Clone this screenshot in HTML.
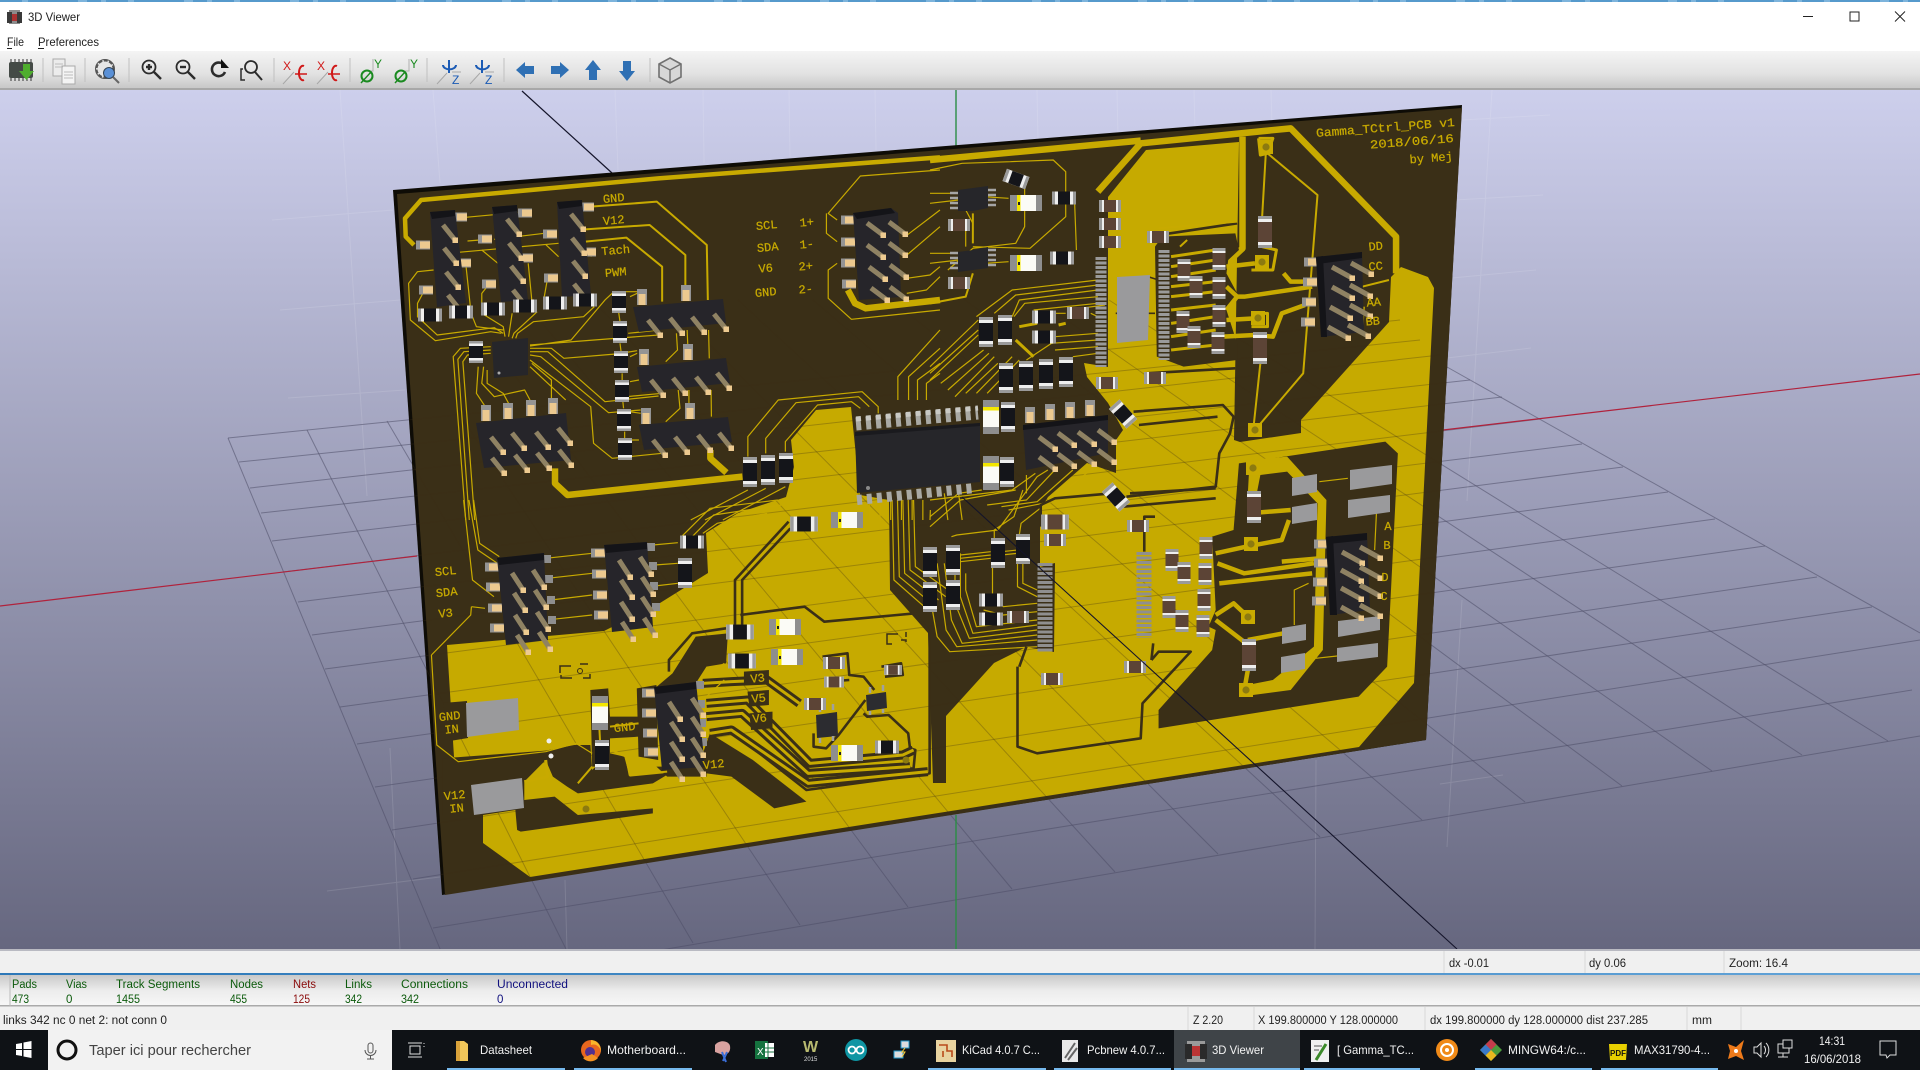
<!DOCTYPE html>
<html lang="fr"><head><meta charset="utf-8"><title>3D Viewer</title>
<style>
html,body{margin:0;padding:0;background:#f0f0f0;overflow:hidden}
svg{display:block}
text{font-family:"Liberation Sans",sans-serif}
.t,.t2,.t3,.t4,.t5,.d,.d2,.d3{fill:none;vector-effect:non-scaling-stroke;stroke-linejoin:round}
.t{stroke:#c8aa00;stroke-width:1.2}
.t2{stroke:#c8aa00;stroke-width:2}
.t3{stroke:#c8aa00;stroke-width:3}
.t4{stroke:#c8aa00;stroke-width:4.5}
.t5{stroke:#c8aa00;stroke-width:6.5}
.d{stroke:#3a2f17;stroke-width:1.6}
.d2{stroke:#3a2f17;stroke-width:2.6}
.d3{stroke:#3a2f17;stroke-width:9}
.s text{font-family:"Liberation Mono",monospace;fill:#c8aa00;stroke:#c8aa00;stroke-width:.25;font-size:12px;text-anchor:middle}
.ui{font-size:12px;fill:#222}
.sb{font-size:11.5px}
.tb{font-size:12px;fill:#f2f2f2}
</style></head><body>
<svg xmlns="http://www.w3.org/2000/svg" width="1920" height="1070" viewBox="0 0 1920 1070">
<defs>
<linearGradient id="bg" x1="0" y1="0" x2="0" y2="1"><stop offset="0" stop-color="#cdcfec"/><stop offset="1" stop-color="#66677f"/></linearGradient>
<linearGradient id="tbg" x1="0" y1="0" x2="0" y2="1"><stop offset="0" stop-color="#f4f4f4"/><stop offset=".6" stop-color="#e2e2e2"/><stop offset="1" stop-color="#c6c6c6"/></linearGradient>
<linearGradient id="pn" x1="0" y1="0" x2="0" y2="1"><stop offset="0" stop-color="#c9c9c9"/><stop offset=".5" stop-color="#ececec"/><stop offset="1" stop-color="#f7f7f7"/></linearGradient>
<linearGradient id="blu" x1="0" y1="0" x2="1" y2="0"><stop offset="0" stop-color="#2d78b8"/><stop offset="1" stop-color="#63a4d8"/></linearGradient>
<clipPath id="cv"><rect x="0" y="90" width="1920" height="860"/></clipPath>
<clipPath id="bd"><polygon points="393,190 1462,105 1426,740 442,895"/></clipPath>

<g id="bv"><rect x="-7" y="-11" width="14" height="22" fill="#eee"/><rect x="-7" y="-11" width="14" height="2.5" fill="#9a9a9a"/><rect x="-7" y="8.5" width="14" height="2.5" fill="#9a9a9a"/><rect x="-7" y="-6" width="14" height="12" fill="#14151a"/></g>
<g id="bV"><rect x="-7" y="-15" width="14" height="30" fill="#eee"/><rect x="-7" y="-15" width="14" height="3" fill="#9a9a9a"/><rect x="-7" y="12" width="14" height="3" fill="#9a9a9a"/><rect x="-7" y="-9" width="14" height="18" fill="#14151a"/></g>
<g id="bh"><rect x="-12" y="-6.5" width="24" height="13" fill="#eee"/><rect x="-12" y="-6.5" width="3" height="13" fill="#9a9a9a"/><rect x="9" y="-6.5" width="3" height="13" fill="#9a9a9a"/><rect x="-6" y="-6.5" width="12" height="13" fill="#14151a"/></g>
<g id="br"><rect x="-6.5" y="-11" width="13" height="22" fill="#eee"/><rect x="-6.5" y="-11" width="13" height="3" fill="#9a9a9a"/><rect x="-6.5" y="8" width="13" height="3" fill="#9a9a9a"/><rect x="-6.5" y="-6" width="13" height="12" fill="#5c4436"/></g>
<g id="bR"><rect x="-7" y="-16" width="14" height="32" fill="#eee"/><rect x="-7" y="-16" width="14" height="3" fill="#9a9a9a"/><rect x="-7" y="13" width="14" height="3" fill="#9a9a9a"/><rect x="-7" y="-10" width="14" height="20" fill="#5c4436"/></g>
<g id="brh"><rect x="-11" y="-6" width="22" height="12" fill="#eee"/><rect x="-11" y="-6" width="3" height="12" fill="#9a9a9a"/><rect x="8" y="-6" width="3" height="12" fill="#9a9a9a"/><rect x="-6" y="-6" width="12" height="12" fill="#5c4436"/></g>
<g id="lh"><rect x="-16" y="-8" width="32" height="16" fill="#8e8e8e"/><rect x="-9" y="-8" width="19" height="16" fill="#fbfbf6"/><rect x="-9" y="-8" width="3.5" height="16" fill="#f4e700"/><rect x="-8" y="-1" width="2" height="3" fill="#222"/></g>
<g id="lv"><rect x="-8" y="-17" width="16" height="34" fill="#8e8e8e"/><rect x="-8" y="-10" width="16" height="20" fill="#fbfbf6"/><rect x="-8" y="-10" width="16" height="3.5" fill="#f4e700"/></g>
<g id="p"><line x1="0" y1="0" x2="12" y2="15" stroke="#8f8263" stroke-width="5"/><rect x="9.5" y="12.5" width="5.5" height="5.5" fill="#edca90"/></g>
<g id="q"><line x1="0" y1="0" x2="16" y2="12" stroke="#8f8263" stroke-width="5"/><rect x="13.5" y="9.5" width="5.5" height="5.5" fill="#edca90"/></g>
<g id="r"><line x1="0" y1="0" x2="20" y2="11" stroke="#8f8263" stroke-width="5"/><rect x="17.5" y="8.5" width="5.5" height="5.5" fill="#edca90"/></g>
<g id="s"><line x1="0" y1="0" x2="11" y2="17" stroke="#8f8263" stroke-width="5"/><rect x="8.5" y="14.5" width="5.5" height="5.5" fill="#edca90"/></g>
<g id="pd"><rect x="-7" y="-4.5" width="14" height="9" fill="#949494"/><rect x="-3" y="-3.5" width="10" height="7" fill="#ecc98f"/></g>
<g id="ps"><rect x="-4" y="-4" width="8" height="8" fill="#8e8e8e"/></g>
<g id="pv"><rect x="-5" y="-8" width="10" height="16" fill="#949494"/><rect x="-3.5" y="-3" width="7" height="11" fill="#ecc98f"/></g>
<g id="via"><rect x="-7" y="-7" width="14" height="14" fill="#c8aa00"/><circle r="3.6" fill="#8c7a10"/></g>
<g id="grid" fill="none">
<path d="M228,438L1400,320M239,462L1420,340M250,488L1440,355M261,513L1470,380M272,541L1502,397M283,572L1540,419M298,602L1582,444M312,635L1623,467M325,669L1668,492M340,707L1715,519M357,744L1765,546M375,787L1817,577M392,830L1872,607M413,879L1920,640M433,928L1912,690M455,985L1920,736"/>
<path d="M228,438L455,985M307,430L573,963M387,421L693,943M460,415L800,925M459,300L908,907M523,300L1012,889M593,300L1115,872M665,300L1218,854M738,300L1320,837M813,300L1422,820M891,300L1525,802M965,300L1622,786M1038,300L1712,771M1109,300L1802,755M1176,300L1888,741M1447,367L1920,633"/>
</g>
</defs>

<!-- window chrome top -->
<rect width="1920" height="1070" fill="#f0f0f0"/>
<rect width="1920" height="52" fill="#fff"/>
<rect width="1920" height="2" fill="#7db4dc"/>
<line x1="0" y1="1" x2="1920" y2="1" stroke="#2f80bd" stroke-width="1" stroke-dasharray="22 6 50 9 14 5"/>
<g transform="translate(7,10)"><rect x="2" y="0" width="11" height="14" fill="#8c8c8c"/><rect x="0" y="2" width="5" height="11" fill="#3a3a3a"/><rect x="10" y="2" width="5" height="11" fill="#3a3a3a"/><rect x="5" y="4" width="5" height="7" fill="#a33"/></g>
<text x="28" y="21" class="ui" textLength="52" lengthAdjust="spacingAndGlyphs">3D Viewer</text>
<text x="7" y="46" class="ui" textLength="17" lengthAdjust="spacingAndGlyphs">File</text><rect x="7" y="48" width="5" height="1" fill="#222"/>
<text x="38" y="46" class="ui" textLength="61" lengthAdjust="spacingAndGlyphs">Preferences</text><rect x="38" y="48" width="6" height="1" fill="#222"/>
<rect x="1803" y="16" width="10" height="1" fill="#222"/>
<rect x="1850" y="12" width="9" height="9" fill="none" stroke="#222"/>
<path d="M1895,11.5l10,10M1905,11.5l-10,10" stroke="#222" fill="none"/>

<!-- toolbar -->
<rect y="51" width="1920" height="38" fill="url(#tbg)"/>
<rect y="88" width="1920" height="3" fill="#a8a8a8"/>
<g stroke="#c0c0c0"><path d="M43,58V82M85,58V82M129,58V82M274,58V82M350,58V82M427,58V82M504,58V82M650,58V82"/></g>
<!-- i1 chip -->
<rect x="9" y="62" width="24" height="16" rx="2" fill="#444a46"/><path d="M11,62v-3M15,62v-3M19,62v-3M23,62v-3M27,62v-3M31,62v-3M11,78v3M15,78v3M19,78v3M23,78v3M27,78v3M31,78v3" stroke="#333"/><path d="M23,64h7v7h4l-7.5,9-7.5-9h4z" fill="#4fae2e"/>
<!-- i2 copy -->
<rect x="53" y="59" width="12" height="17" fill="#ececec" stroke="#aaa"/><rect x="62" y="66" width="13" height="18" fill="#f4f4f4" stroke="#aaa"/><path d="M55,64h8M55,67h8M64,72h9M64,75h9M64,78h9" stroke="#bbb"/>
<!-- i3 gear -->
<circle cx="105" cy="69" r="8.5" fill="#e6e6e6" stroke="#555" stroke-width="2" stroke-dasharray="4 1.5"/><circle cx="105" cy="69" r="9.5" fill="none" stroke="#555" stroke-width="1"/><circle cx="109" cy="73" r="5.5" fill="#5a90d6" stroke="#345"/><line x1="113" y1="77" x2="119" y2="83" stroke="#666" stroke-width="2"/>
<!-- zoom -->
<g fill="none" stroke="#2c2c2c" stroke-width="1.8"><circle cx="149" cy="67" r="6.5"/><line x1="154" y1="72" x2="161" y2="79" stroke-width="2.4"/><path d="M146,67h6M149,64v6" stroke-width="2.4"/>
<circle cx="183" cy="67" r="6.5"/><line x1="188" y1="72" x2="195" y2="79" stroke-width="2.4"/><path d="M180,67h6" stroke-width="2.4"/>
<path d="M225,72a6.8,6.8 0 1 1-1-7" stroke-width="2.6"/><circle cx="251" cy="67" r="6"/><line x1="255" y1="72" x2="262" y2="80" stroke-width="2"/><path d="M243,69h-2v11h4" stroke-width="1.5"/></g>
<path d="M221,59v9h8z" fill="#111"/>
<!-- X Y Z -->
<g font-size="12" font-family="Liberation Sans"><text x="283" y="70" fill="#d01818">X</text><text x="317" y="70" fill="#d01818">X</text></g>
<g fill="none" stroke="#d01818" stroke-width="2"><path d="M304,66a4,7 0 0 0-5,7a4,7 0 0 0 5,7"/><path d="M337,66a4,7 0 0 0-5,7a4,7 0 0 0 5,7"/><path d="M295,74h12M328,74h12" stroke-width="1.4"/></g>
<path d="M283,84l11-12M317,84l11-12" stroke="#a8a8a8"/>
<g font-size="12"><text x="374" y="68" fill="#1a8a20">Y</text><text x="410" y="68" fill="#1a8a20">Y</text></g>
<path d="M373,59v12h-7M409,59v12h-7" stroke="#b0b0b0" fill="none"/>
<g fill="none" stroke="#1a8a20" stroke-width="2"><circle cx="367" cy="76" r="5.5"/><circle cx="401" cy="76" r="5.5"/></g><path d="M361,83l10-11M395,83l10-11" stroke="#1a8a20" stroke-width="1.4"/>
<g font-size="12"><text x="452" y="84" fill="#1b5bb5">Z</text><text x="485" y="84" fill="#1b5bb5">Z</text></g>
<g fill="none" stroke="#1b5bb5" stroke-width="2"><path d="M443,65a6,4 0 1 0 13,0"/><path d="M449,60v13M482,60v13"/><path d="M476,65a6,4 0 1 0 13,0"/></g>
<path d="M437,84l10-11M452,72h9M470,84l10-11M485,72h9" stroke="#a8a8a8"/>
<!-- arrows -->
<path d="M516,70l9-8v4h9v8h-9v4z" fill="#2f70b4"/><path d="M569,70l-9-8v4h-9v8h9v4z" fill="#2f70b4"/><path d="M593,60l8,10h-4v10h-8V70h-4z" fill="#2f70b4"/><path d="M627,81l8-10h-4V61h-8v10h-4z" fill="#2f70b4"/>
<path d="M670,58l11,6v13l-11,6-11-6V64z" fill="#d8d8d8" stroke="#707070" stroke-width="1.6"/><path d="M659,64l11,6 11-6M670,70v13" fill="none" stroke="#707070" stroke-width="1.4"/>

<!-- 3D canvas -->
<rect y="90" width="1920" height="860" fill="url(#bg)"/>
<g clip-path="url(#cv)">
<g stroke="#fff" stroke-opacity=".12" fill="none"><path d="M340,90L367,496M433,90L440,183M390,748L400,950M615,90L618,170M703,90L704,163M789,90L790,157M875,90L876,150M1037,90L1038,143M1117,90L1118,140M1194,90L1195,130M1271,90L1272,125M1492,90L1467,501M1462,600L1447,847M1316,760L1315,950M565,880L567,950M272,220L393,210M280,310L400,300M288,398L405,390M1462,120L1550,115M1455,200L1543,195M1452,278L1536,270M1447,358L1531,348M1440,784L1503,775M327,891L440,877"/></g>
<use href="#grid" stroke="#4c4d66" stroke-opacity=".55" stroke-width="1"/>
<path d="M0,606L417,556M1443,430L1920,374" stroke="#b0223c" stroke-width="1.2" fill="none"/>
<path d="M956,90V165M956,815V950" stroke="#2b8d45" stroke-width="1.4" fill="none"/>
<path d="M522,91L612,173" stroke="#14142a" stroke-width="1.2" fill="none"/>
</g>

<!-- board -->
<polygon points="393,190 1462,105 1426,740 442,895" fill="#0e0c06"/>
<polygon points="397,194 1462,108 1426,740 445,895" fill="#3a2f17"/>

<!-- main copper -->
<polygon fill="#c6aa00" points="447,645 604,631 660,603 708,573 706,533 738,513 786,497 794,467 791,440 816,410 851,407 860,495 889,500 890,590 928,633 933,783 946,783 946,716 994,663 1026,647 1054,652 1055,563 1040,567 1040,510 1048,497 1087,463 1116,473 1116,440 1123,430 1108,403 1087,377 1084,363 1108,367 1108,197 1146,150 1239,142 1234,440 1240,442 1301,433 1301,420 1389,322 1391,277 1401,267 1428,277 1434,288 1414,683 1359,747 530,877 483,843 483,815 454,757"/>
<use href="#grid" clip-path="url(#bd)" stroke="#3a2f17" stroke-opacity=".3" stroke-width="1"/>
<polygon fill="#3a2f17" points="443,703 467,701 468,738 450,741"/>

<!-- zoom 6 coords : lower left -->
<g transform="translate(410,500) scale(.35714,.33333)">
<polygon fill="#3a2f17" points="90,775 380,752 460,735 505,735 510,810 560,760 600,770 615,830 730,818 680,850 470,880 440,860 400,830 380,780 320,845 320,900 405,890 470,945 680,925 680,940 310,995 300,990 295,930 205,945 90,945"/>
<polygon fill="#3a2f17" points="830,820 900,830 1020,925 1110,905 960,780 840,700 820,760"/>
<polygon fill="#3a2f17" points="735,520 800,410 890,400 885,490 830,500 800,550 680,570"/>
<polygon fill="#3a2f17" points="635,565 690,555 695,780 640,770"/>
<polygon fill="#3a2f17" points="505,570 555,565 560,650 640,650 640,710 560,715 560,800 510,800"/>
<polygon fill="#3a2f17" points="690,800 830,800 830,830 720,830"/>
<!-- outline tracks on pour -->
<path class="d2" d="M925,345L1105,320L1160,365L1415,340L1455,395L1455,820L1110,870L955,740"/>
<path class="d2" d="M910,385L910,240L1060,65M930,385L930,240L1065,85"/>
<path class="d2" d="M725,515L725,480L790,400L885,385"/>
<path class="d2" d="M1130,700L1130,740L1165,745L1200,705L1275,600M1270,640L1280,650L1340,645L1395,700L1400,745L1415,750L1410,805L1370,810"/>
<path class="d2" d="M1155,470L1225,460L1230,525L1270,530L1300,570M1165,545L1230,540M1320,500L1375,490L1380,525L1330,530"/>
<!-- V tracks -->
<path class="d3" d="M820,550L900,545L1000,540L1090,610"/>
<path class="d3" d="M830,610L945,600L1120,790L1380,765L1410,750"/>
<path class="d3" d="M830,650L930,640L1115,820L1400,800"/>
<path class="d3" d="M840,700L900,690L1115,850L1450,815"/>
<path class="t3" d="M820,550L900,545L1000,540L1090,610"/>
<path class="t3" d="M830,610L945,600L1120,790L1380,765L1410,750"/>
<path class="t3" d="M830,650L930,640L1115,820L1400,800"/>
<path class="t3" d="M840,700L900,690L1115,850L1450,815"/>
<polygon fill="#3a2f17" points="935,515 1005,510 1005,550 935,555"/>
<polygon fill="#3a2f17" points="945,575 1005,570 1005,615 950,620"/>
<polygon fill="#3a2f17" points="950,640 1015,635 1015,685 955,690"/>
<!-- thin yellow -->
<path class="t" d="M60,465L75,735L135,785L380,755L465,730L510,760"/>
<path class="t" d="M60,465L170,345L172,320"/>
<path class="t" d="M150,0L175,240L235,290M165,0L190,150L245,190M178,0L195,130L250,170M172,320L210,325"/>
<path class="t" d="M380,175L510,160M385,235L510,220M395,300L510,285M400,358L510,345M680,135L750,128M685,195L750,190M685,258L750,250"/>
<path class="t2" d="M565,750L605,770L615,825L720,815M510,800L470,850"/>
<path class="t3" d="M380,780L385,830L320,845"/>
<path class="t2" d="M530,680L532,720M560,680L640,670"/>
<path class="t" d="M810,540L880,490M830,590L880,540"/>
<path class="t" d="M760,110L840,25L1030,0M790,110L850,45L1040,15M820,100L860,70L1000,40"/>
<path class="t" d="M1350,0L1355,240L1440,320M1365,0L1370,230L1460,310M1380,0L1385,220L1480,300M1395,0L1400,210L1500,290M1410,0L1415,200L1520,280"/>
</g>

<!-- zoom 4 coords : top left tracks -->
<g transform="translate(380,100) scale(.35714,.33333)">
<path class="t4" d="M95,435L72,410L70,355L115,300L780,235L1568,172"/>
<path class="t2" d="M590,320L775,305L915,435L918,600M575,388L755,375L855,465L855,560M575,425L690,413L790,500L790,605"/>
<path class="t" d="M240,352L410,335M245,423L280,420M320,418L460,400M220,457L500,430M285,450L330,490M465,435L500,470M590,470L600,450"/>
<path class="t" d="M150,510L105,515L80,550L85,660L155,722L310,695L340,700M120,580L105,610L105,650L160,705L320,683L345,700"/>
<path class="t" d="M240,490L255,640L270,680L345,690M300,560L285,580L285,610M285,640L345,680L350,710M415,490L425,600M370,640L360,710M470,530L460,590M440,635L375,700L370,715M600,620L570,650L430,665L385,700L380,715"/>
<path class="t" d="M420,738L535,720L630,600L655,575L720,575M420,735L780,705M420,745L480,745L515,775L660,762L720,752M420,755L470,755L630,905L780,888M420,765L450,770L640,938L730,930M420,780L590,920L598,1030L650,1075L790,1060M425,790L480,840L480,900M420,800L520,900"/>
<path class="t" d="M310,740L225,745L205,770L240,1260M310,750L235,755L218,778L250,1260M310,760L245,765L232,785L265,1260"/>
<path class="t" d="M275,800L270,880L295,920M290,800L285,850L320,890L405,870L420,900M300,810L300,850L345,880L360,910"/>
<path class="t" d="M668,635L672,665M672,730L675,755M678,820L678,840M680,905L682,925M685,995L685,1020M700,590L720,580M695,700L780,690M695,1020L725,1020M690,890L790,880M700,935L730,940M700,845L725,840M700,770L720,760"/>
<path class="t" d="M830,700L833,750L800,785M860,690L862,740M920,690L922,775M835,870L840,925L800,965M865,870L865,915M927,870L928,950"/>
<path class="t5" d="M490,1105L490,1150L525,1185L1015,1130"/>
<path class="t5" d="M925,1050L925,1075L970,1118"/>
<path class="t" d="M1280,360L1255,340L1345,228L1568,210M1280,425L1250,400L1250,340M1280,490L1255,510L1255,595L1320,658L1568,630"/>
<path class="t5" d="M1310,570L1330,610L1360,625L1568,600"/>
<path class="t" d="M1030,1070L1030,1010L1115,900L1350,875L1395,920L1395,940M1080,1060L1080,1015L1165,908L1340,890L1370,920M1135,1055L1135,1025L1225,915L1320,905L1345,925"/>
<path class="t" d="M1450,900L1450,830L1568,690M1480,900L1480,830L1568,745M1505,900L1505,840L1568,790M1530,900L1530,850L1568,820"/>
<path class="t" d="M1030,1170L870,1260M1080,1165L910,1260M1135,1160L960,1260"/>
<path class="t" d="M1370,1200L1370,1260M1400,1200L1400,1260M1430,1200L1430,1260M1460,1200L1460,1260M1490,1200L1490,1260M1520,1200L1520,1260"/>
<path class="t" d="M1470,410L1568,330M1470,470L1568,380M1475,535L1540,525L1568,500M1475,580L1530,570L1568,530"/>
</g>

<!-- zoom 5 coords : top right -->
<g transform="translate(930,100) scale(.35714,.33333)">
<path class="t5" d="M470,275L590,130L1010,85L1305,410L1305,520"/>
<path class="t5" d="M0,180L590,122"/>
<path class="t5" d="M875,110L875,445L830,490"/>
<polygon fill="#3a2f17" points="630,440 650,410 855,400 865,450 835,480 830,520 865,590 830,630 860,730 860,780 710,800 635,770"/>
<path class="d2" d="M610,410L860,370M605,820L855,805"/>
<path class="d2" d="M570,935L820,915L850,950L840,1000L810,1060L800,1160L550,1190"/>
<path class="d2" d="M585,975L805,950"/>
<path class="d" d="M630,640L520,640M610,530L640,540"/>
<path class="t" d="M225,185L345,180L380,215L380,350L280,445L120,440M265,240L265,380L240,430L120,445L50,510M405,310L410,450M150,290L220,295M155,490L220,485M0,210L90,190L225,185"/>
<path class="t" d="M80,280L0,280M80,300L0,310M80,460L0,460M80,480L0,490M100,380L100,440M100,330L120,370"/>
<path class="t2" d="M120,340L120,430M120,520L100,590L0,610"/>
<path class="t" d="M470,540L230,570L130,650M470,555L240,585L180,640M470,570L250,600L230,650M470,590L265,610L235,650M470,610L290,630M470,650L450,640M470,700L350,710M470,720L340,730L270,780M470,740L350,750M470,760L400,770"/>
<path class="t" d="M135,660L0,800M135,690L0,820M135,705L0,840M150,750L30,850M165,760L50,870M180,770L70,890M190,790L100,880M230,770L130,880M250,780L160,880"/>
<path class="t3" d="M250,680L300,670M240,720L290,770M360,675L380,670"/>
<path class="t" d="M420,625L490,615M350,640L380,640"/>
<path class="t" d="M270,1125L270,1180M295,1120L230,1170L0,1200M345,1115L270,1200L160,1215M400,1110L300,1205L200,1220M455,1105L340,1205L220,1230M1,1230L0,1260M40,1180L50,1260M80,1180L90,1260"/>
<path class="t2" d="M945,160L1085,285L1045,820L910,990M940,165L930,350M925,790L905,990"/>
<path class="t3" d="M920,115L960,115L945,160L925,165L920,115"/>
<path class="t3" d="M930,440L970,450L960,510L900,510M910,640L945,640L945,680L900,680"/>
<path class="t3" d="M675,470L800,450M675,500L800,480M675,530L800,510M675,560L800,545M675,590L800,575M675,630L800,615M675,670L800,650M675,710L800,690M675,750L800,735"/>
<path class="t4" d="M830,500L910,490M860,590L880,590L1070,560M990,520L1010,545L1060,545M830,660L910,655M820,710L910,705L960,710L985,640L1050,615M830,560L860,590L830,630"/>
<path class="t2" d="M720,420L700,440M640,385L860,365"/>
<path class="t2" d="M1210,560L1285,540M1210,690L1215,620"/>
</g>

<!-- zoom 7 coords : lower right -->
<g transform="translate(930,430) scale(.35714,.33333)">
<polygon fill="#3a2f17" points="865,100 1275,35 1310,70 1280,710 1200,800 640,895 640,840 790,660 800,600 780,590 800,540 790,320 850,300"/>
<polygon fill="#c6aa00" points="895,90 1000,80 1110,210 1100,660 1010,780 870,800 865,770 960,750 1075,650 1085,220 1000,125 925,135 915,190 890,190"/>
<path class="t4" d="M800,370L885,350L985,330L1005,270M890,250L1010,240M985,395L1090,385M805,400L880,430L1075,400M810,460L1070,430M800,555L850,520L890,560M800,570L885,640M890,630L990,610M895,690L880,780"/>
<path class="t" d="M1090,155L1170,145M1080,685L1140,678M1250,250L1245,360M1060,460L1020,480L1020,585"/>
<!-- bundle to strip -->
<path class="t" d="M300,520L205,530L190,510M300,545L205,555L150,540M300,570L130,590L100,480L100,430M300,585L120,610L85,500L85,370M300,600L110,625L70,520L70,400M300,615L90,640L60,570L40,400M300,630L75,650L45,600L20,400M300,650L55,665L20,620L0,500M175,410L175,490M245,400L245,470L300,500M260,400L260,460L300,480M60,320L75,315L190,300L300,140L330,120M180,330L180,300L235,260L260,180M250,315L255,280L350,200M0,290L85,210L240,180M0,260L80,190L145,180"/>
<path class="t" d="M85,375L170,365M85,385L170,375M85,395L170,385M200,365L245,360M200,375L245,370"/>
<path class="d2" d="M245,710L245,950L300,970L590,925L595,820L730,665L640,665L620,690"/>
<path class="d2" d="M270,650L250,710M310,290L310,225L350,205L510,190M540,230L800,205M560,190L800,175M600,365L600,260L630,260M620,690L625,640"/>
</g>

<!-- chips / strips -->
<line x1="856" y1="424" x2="978" y2="413" stroke="#a9a9a4" stroke-width="13" stroke-dasharray="5 5"/>
<line x1="856" y1="419" x2="978" y2="408" stroke="#c9c9c4" stroke-width="5" stroke-dasharray="5 5"/>
<line x1="857" y1="500" x2="975" y2="488" stroke="#a9a9a4" stroke-width="10" stroke-dasharray="5 5"/>
<polygon points="855,432 980,423 980,482 857,493" fill="#26262a"/>
<polygon points="855,432 980,423 980,426 855,436" fill="#1a1a1e"/>
<circle cx="868" cy="488" r="2" fill="#8a8a8a"/>
<polygon points="492,342 528,338 528,375 494,378" fill="#26262a"/><circle cx="499" cy="373" r="1.5" fill="#aaa"/>
<polygon points="973,188 988,186 988,208 973,211 958,211 958,190" fill="#26262a"/><polygon points="973,250 988,247 988,268 958,272 958,252" fill="#26262a"/>
<path d="M950,193h8M950,198h8M950,203h8M950,208h8M988,190h8M988,195h8M988,200h8M988,205h8M950,253h8M950,258h8M950,263h8M950,268h8M988,250h8M988,255h8M988,260h8M988,265h8" stroke="#a5a5a5" stroke-width="2.5"/>
<line x1="1101" y1="257" x2="1101" y2="367" stroke="#9a9a9a" stroke-width="11" stroke-dasharray="3 1.5"/>
<line x1="1164" y1="250" x2="1164" y2="360" stroke="#9a9a9a" stroke-width="11" stroke-dasharray="3 1.5"/>
<line x1="1045" y1="563" x2="1045" y2="652" stroke="#8f8f8f" stroke-width="15" stroke-dasharray="3 1.5"/>
<line x1="1144" y1="552" x2="1144" y2="638" stroke="#8f8f8f" stroke-width="15" stroke-dasharray="3 1.5"/>
<polygon points="1117,277 1150,275 1148,340 1117,343" fill="#9a9a9c"/>
<polygon points="466,703 518,698 519,730 467,737" fill="#9a9a9c"/>
<polygon points="471,785 522,778 524,808 474,815" fill="#9a9a9c"/>
<g fill="#9a9a9c"><polygon points="1292,478 1317,474 1317,492 1292,496"/><polygon points="1292,507 1317,503 1317,520 1292,524"/><polygon points="1350,470 1392,465 1392,484 1350,490"/><polygon points="1348,500 1390,495 1390,512 1348,518"/><polygon points="1282,628 1306,624 1306,640 1282,644"/><polygon points="1281,657 1305,653 1305,669 1281,673"/><polygon points="1338,621 1380,616 1380,630 1338,637"/><polygon points="1337,648 1378,643 1378,657 1337,662"/></g>
<polygon points="816,715 837,712 838,736 817,738" fill="#2c2c30"/><polygon points="866,695 886,692 887,708 867,711" fill="#2c2c30"/>
<path d="M820,712v-6M833,710v-6M820,738v5M833,736v5M870,693v-6M883,691v-6M870,711v4M883,709v4" stroke="#a0a0a0" stroke-width="2.5"/>

<!-- vias -->
<use href="#via" x="1266" y="147"/><use href="#via" x="1262" y="262"/><use href="#via" x="1258" y="318"/><use href="#via" x="1255" y="430"/><use href="#via" x="1253" y="468"/><use href="#via" x="1251" y="544"/><use href="#via" x="1248" y="617"/><use href="#via" x="1246" y="690"/>
<circle cx="906" cy="760" r="3.5" fill="#8c7a10"/><circle cx="586" cy="809" r="3.5" fill="#8c7a10"/><circle cx="549" cy="741" r="2.5" fill="#eee"/><circle cx="551" cy="756" r="2.5" fill="#eee"/>
<path d="M571,666h-11v7M588,664h-8M572,678h-11v-3M590,674v4h-7" stroke="#3a2f17" fill="none" stroke-width="1.5"/><circle cx="580" cy="671" r="2.5" fill="none" stroke="#3a2f17"/>
<path d="M898,634h-11v10h5M906,632v5M906,642v-2h-5" stroke="#3a2f17" fill="none" stroke-width="1.5"/>

<!-- pads -->
<use href="#pd" x="423" y="245"/><use href="#pd" x="460" y="217"/><use href="#pd" x="485" y="239"/><use href="#pd" x="525" y="213"/><use href="#pd" x="550" y="234"/><use href="#pd" x="587" y="207"/><use href="#pd" x="464" y="263"/><use href="#pd" x="426" y="290"/><use href="#pd" x="489" y="284"/><use href="#pd" x="551" y="278"/><use href="#pd" x="589" y="252"/><use href="#pd" x="526" y="258"/>
<use href="#pv" x="642" y="297"/><use href="#pv" x="686" y="293"/><use href="#pv" x="644" y="357"/><use href="#pv" x="688" y="352"/><use href="#pv" x="646" y="416"/><use href="#pv" x="690" y="411"/>
<use href="#pv" x="486" y="413"/><use href="#pv" x="508" y="411"/><use href="#pv" x="531" y="408"/><use href="#pv" x="553" y="406"/>
<use href="#pv" x="1030" y="415"/><use href="#pv" x="1050" y="412"/><use href="#pv" x="1070" y="410"/><use href="#pv" x="1090" y="408"/>
<use href="#pd" x="848" y="220"/><use href="#pd" x="848" y="242"/><use href="#pd" x="848" y="263"/><use href="#pd" x="849" y="284"/>
<use href="#pd" x="1311" y="262"/><use href="#pd" x="1310" y="282"/><use href="#pd" x="1309" y="302"/><use href="#pd" x="1308" y="322"/>
<use href="#pd" x="1321" y="544"/><use href="#pd" x="1321" y="563"/><use href="#pd" x="1320" y="582"/><use href="#pd" x="1319" y="601"/>
<use href="#pd" x="492" y="567"/><use href="#pd" x="493" y="587"/><use href="#pd" x="495" y="608"/><use href="#pd" x="497" y="628"/>
<use href="#pd" x="598" y="553"/><use href="#pd" x="599" y="574"/><use href="#pd" x="600" y="595"/><use href="#pd" x="601" y="615"/>
<use href="#pd" x="649" y="693"/><use href="#pd" x="649" y="713"/><use href="#pd" x="650" y="733"/><use href="#pd" x="651" y="752"/>
<use href="#ps" x="547" y="559"/><use href="#ps" x="549" y="579"/><use href="#ps" x="551" y="600"/><use href="#ps" x="552" y="620"/>
<use href="#ps" x="651" y="547"/><use href="#ps" x="653" y="566"/><use href="#ps" x="654" y="586"/><use href="#ps" x="656" y="607"/>
<use href="#ps" x="700" y="685"/><use href="#ps" x="701" y="704"/><use href="#ps" x="702" y="723"/><use href="#ps" x="703" y="742"/>

<!-- headers -->
<g fill="#26252a">
<polygon points="430,212 455,210 466,303 437,307"/><polygon points="492,207 517,205 528,300 501,302"/><polygon points="557,202 582,200 591,295 562,297"/>
<polygon points="633,307 723,299 726,323 639,332"/><polygon points="637,367 726,358 730,383 642,392"/><polygon points="639,425 728,417 732,442 644,450"/>
<polygon points="476,423 566,413 571,460 484,468"/>
<polygon points="853,213 891,208 898,213 901,297 859,300"/>
<polygon points="1023,425 1108,415 1108,453 1026,470"/>
<polygon points="1316,257 1362,252 1364,332 1321,337"/>
<polygon points="1326,537 1367,533 1370,610 1330,615"/>
<polygon points="497,558 544,553 548,640 506,645"/><polygon points="604,545 647,542 653,627 612,632"/><polygon points="654,687 696,682 705,767 662,770"/>
</g>
<g fill="#141418">
<polygon points="430,212 455,210 455,216 432,219"/><polygon points="492,207 517,205 517,211 494,214"/><polygon points="557,202 582,200 582,206 559,209"/>
<polygon points="853,213 891,208 895,213 857,219"/><polygon points="1316,257 1362,252 1362,258 1318,264"/><polygon points="1326,537 1367,533 1367,540 1328,544"/>
<polygon points="497,558 544,553 544,560 499,565"/><polygon points="604,545 647,542 647,549 606,553"/><polygon points="654,687 696,682 696,689 656,694"/>
<polygon points="1023,425 1108,415 1108,420 1023,430"/>
<polygon points="1316,257 1323,256 1327,337 1321,337"/><polygon points="1326,537 1333,536 1337,615 1330,615"/>
</g>
<!-- pins -->
<use href="#p" x="443" y="225"/><use href="#p" x="444" y="248"/><use href="#p" x="446" y="272"/><use href="#p" x="448" y="295"/>
<use href="#p" x="507" y="219"/><use href="#p" x="509" y="243"/><use href="#p" x="511" y="266"/><use href="#p" x="513" y="290"/>
<use href="#p" x="571" y="214"/><use href="#p" x="572" y="238"/><use href="#p" x="573" y="261"/><use href="#p" x="574" y="284"/>
<use href="#p" x="648" y="320"/><use href="#p" x="670" y="318"/><use href="#p" x="692" y="317"/><use href="#p" x="714" y="314"/>
<use href="#p" x="651" y="380"/><use href="#p" x="673" y="378"/><use href="#p" x="696" y="377"/><use href="#p" x="717" y="373"/>
<use href="#p" x="653" y="440"/><use href="#p" x="675" y="437"/><use href="#p" x="698" y="435"/><use href="#p" x="719" y="433"/>
<use href="#p" x="491" y="437"/><use href="#p" x="512" y="433"/><use href="#p" x="536" y="432"/><use href="#p" x="558" y="428"/>
<use href="#p" x="492" y="458"/><use href="#p" x="515" y="455"/><use href="#p" x="537" y="453"/><use href="#p" x="559" y="450"/>
<use href="#q" x="867" y="223"/><use href="#q" x="867" y="245"/><use href="#q" x="869" y="267"/><use href="#q" x="871" y="288"/>
<use href="#q" x="889" y="222"/><use href="#q" x="889" y="243"/><use href="#q" x="890" y="265"/><use href="#q" x="890" y="287"/>
<use href="#q" x="1039" y="437"/><use href="#q" x="1058" y="433"/><use href="#q" x="1078" y="432"/><use href="#q" x="1098" y="430"/>
<use href="#q" x="1039" y="457"/><use href="#q" x="1058" y="454"/><use href="#q" x="1078" y="452"/><use href="#q" x="1098" y="450"/>
<use href="#r" x="1332" y="267"/><use href="#r" x="1332" y="287"/><use href="#r" x="1330" y="307"/><use href="#r" x="1328" y="327"/>
<use href="#r" x="1351" y="263"/><use href="#r" x="1350" y="285"/><use href="#r" x="1350" y="305"/><use href="#r" x="1348" y="325"/>
<use href="#r" x="1342" y="552"/><use href="#r" x="1341" y="570"/><use href="#r" x="1341" y="588"/><use href="#r" x="1341" y="607"/>
<use href="#r" x="1360" y="547"/><use href="#r" x="1360" y="567"/><use href="#r" x="1360" y="585"/><use href="#r" x="1360" y="605"/>
<use href="#s" x="512" y="573"/><use href="#s" x="514" y="593"/><use href="#s" x="515" y="615"/><use href="#s" x="517" y="635"/>
<use href="#s" x="533" y="570"/><use href="#s" x="535" y="590"/><use href="#s" x="537" y="612"/><use href="#s" x="539" y="632"/>
<use href="#s" x="619" y="560"/><use href="#s" x="621" y="580"/><use href="#s" x="621" y="602"/><use href="#s" x="622" y="622"/>
<use href="#s" x="640" y="557"/><use href="#s" x="642" y="577"/><use href="#s" x="642" y="597"/><use href="#s" x="644" y="618"/>
<use href="#s" x="669" y="702"/><use href="#s" x="671" y="722"/><use href="#s" x="671" y="742"/><use href="#s" x="671" y="762"/>
<use href="#s" x="692" y="698"/><use href="#s" x="692" y="717"/><use href="#s" x="692" y="738"/><use href="#s" x="692" y="757"/>

<!-- smd -->
<use href="#bv" x="619" y="302"/><use href="#bv" x="620" y="332"/><use href="#bv" x="621" y="362"/><use href="#bv" x="622" y="391"/><use href="#bv" x="624" y="420"/><use href="#bv" x="625" y="449"/>
<use href="#bh" x="430" y="315"/><use href="#bh" x="461" y="312"/><use href="#bh" x="493" y="309"/><use href="#bh" x="525" y="306"/><use href="#bh" x="555" y="303"/><use href="#bh" x="585" y="300"/>
<use href="#bv" x="476" y="352"/>
<use href="#bV" x="750" y="472"/><use href="#bV" x="768" y="470"/><use href="#bV" x="786" y="468"/>
<use href="#bh" transform="translate(1016,179) rotate(20)"/><use href="#lh" x="1026" y="203"/><use href="#bh" x="1064" y="198"/><use href="#lh" x="1026" y="263"/><use href="#bh" x="1062" y="258"/>
<use href="#brh" x="959" y="225"/><use href="#brh" x="959" y="283"/>
<use href="#brh" x="1110" y="206"/><use href="#brh" x="1110" y="224"/><use href="#brh" x="1110" y="242"/>
<use href="#brh" x="1158" y="237"/><use href="#brh" x="1155" y="378"/><use href="#brh" x="1107" y="383"/>
<use href="#br" x="1219" y="259"/><use href="#br" x="1184" y="270"/><use href="#br" x="1196" y="287"/><use href="#br" x="1219" y="288"/><use href="#br" x="1183" y="322"/><use href="#br" x="1219" y="316"/><use href="#br" x="1194" y="337"/><use href="#br" x="1218" y="343"/>
<use href="#bR" x="1265" y="232"/><use href="#bR" x="1260" y="348"/>
<use href="#bV" x="986" y="332"/><use href="#bV" x="1005" y="330"/>
<use href="#bh" x="1044" y="317"/><use href="#bh" x="1044" y="337"/><use href="#brh" x="1078" y="313"/>
<use href="#bV" x="1006" y="378"/><use href="#bV" x="1026" y="376"/><use href="#bV" x="1046" y="374"/><use href="#bV" x="1066" y="372"/>
<use href="#lv" x="991" y="417"/><use href="#bV" x="1008" y="417"/><use href="#lv" x="991" y="473"/><use href="#bV" x="1007" y="472"/>
<use href="#bh" transform="translate(1123,414) rotate(48) scale(1.1)"/><use href="#bh" transform="translate(1116,497) rotate(48) scale(1.1)"/>
<use href="#brh" transform="translate(1055,522) scale(1.25)"/><use href="#brh" x="1055" y="540"/>
<use href="#bV" x="998" y="553"/><use href="#bV" x="1023" y="549"/><use href="#bV" x="953" y="560"/><use href="#bV" x="953" y="595"/>
<use href="#bh" x="991" y="600"/><use href="#bh" x="991" y="619"/><use href="#brh" x="1018" y="617"/><use href="#brh" x="1052" y="679"/>
<use href="#brh" x="1138" y="526"/><use href="#brh" x="1135" y="667"/>
<use href="#br" x="1206" y="548"/><use href="#br" x="1172" y="560"/><use href="#br" x="1184" y="573"/><use href="#br" x="1205" y="574"/><use href="#br" x="1169" y="607"/><use href="#br" x="1204" y="600"/><use href="#br" x="1182" y="621"/><use href="#br" x="1203" y="626"/>
<use href="#bR" x="1254" y="507"/><use href="#bR" x="1249" y="655"/>
<use href="#bh" x="692" y="542"/><use href="#bV" x="685" y="573"/>
<use href="#bh" transform="translate(804,524) scale(1.15)"/><use href="#lh" x="847" y="520"/>
<use href="#bV" x="930" y="562"/><use href="#bV" x="953" y="560"/><use href="#bV" x="930" y="597"/><use href="#bV" x="953" y="595"/>
<use href="#bh" transform="translate(740,632) scale(1.15)"/><use href="#lh" x="785" y="627"/><use href="#bh" transform="translate(742,661) scale(1.15)"/><use href="#lh" x="787" y="657"/>
<use href="#brh" x="834" y="663"/><use href="#brh" transform="translate(834,682) scale(.9)"/><use href="#brh" transform="translate(893,670) scale(.8)"/><use href="#brh" x="815" y="704"/>
<use href="#lh" x="847" y="753"/><use href="#bh" x="887" y="747"/>
<use href="#lv" x="600" y="713"/><use href="#bV" x="602" y="755"/>

<!-- axis line over board -->
<path d="M962,497L1457,949" stroke="#14142a" stroke-width="1.1" fill="none" clip-path="url(#cv)"/>

<!-- silk text -->
<g class="s">
<text transform="translate(614,202) rotate(-5)">GND</text><text transform="translate(614,224) rotate(-5)">V12</text><text transform="translate(616,254) rotate(-5)">Tach</text><text transform="translate(616,276) rotate(-5)">PWM</text>
<text transform="translate(767,229) rotate(-5)">SCL</text><text transform="translate(768,251) rotate(-5)">SDA</text><text transform="translate(766,272) rotate(-5)">V6</text><text transform="translate(766,296) rotate(-5)">GND</text>
<text transform="translate(807,226) rotate(-5)">1+</text><text transform="translate(807,248) rotate(-5)">1-</text><text transform="translate(806,270) rotate(-5)">2+</text><text transform="translate(806,293) rotate(-5)">2-</text>
<text style="text-anchor:end" transform="translate(1455,126) rotate(-4.5)" textLength="139" lengthAdjust="spacingAndGlyphs">Gamma_TCtrl_PCB v1</text>
<text style="text-anchor:end" transform="translate(1454,142) rotate(-4.5)" textLength="84" lengthAdjust="spacingAndGlyphs">2018/06/16</text>
<text style="text-anchor:end" transform="translate(1453,160) rotate(-4.5)">by Mej</text>
<text transform="translate(1376,250) rotate(-5)" font-size="11">DD</text><text transform="translate(1376,270) rotate(-5)">CC</text><text transform="translate(1374,306) rotate(-5)">AA</text><text transform="translate(1373,325) rotate(-5)">BB</text>
<text transform="translate(1388,530)">A</text><text transform="translate(1387,549)">B</text><text transform="translate(1385,581)">D</text><text transform="translate(1384,600)">C</text>
<text transform="translate(446,575) rotate(-6)">SCL</text><text transform="translate(447,596) rotate(-6)">SDA</text><text transform="translate(446,617) rotate(-6)">V3</text>
<text transform="translate(450,720) rotate(-6)">GND</text><text transform="translate(452,733) rotate(-6)">IN</text><text transform="translate(455,799) rotate(-6)">V12</text><text transform="translate(457,812) rotate(-6)">IN</text>
<text transform="translate(625,731) rotate(-6)">GND</text><text transform="translate(758,682) rotate(-6)">V3</text><text transform="translate(759,702) rotate(-6)">V5</text><text transform="translate(760,722) rotate(-6)">V6</text><text transform="translate(714,768) rotate(-6)">V12</text>
</g>

<!-- bottom status strip -->
<rect y="949" width="1920" height="2" fill="#b9bac2"/>
<rect y="951" width="1920" height="22" fill="#f0f0f0"/>
<rect y="973" width="1920" height="2" fill="url(#blu)"/>
<rect y="975" width="1920" height="31" fill="url(#pn)"/>
<rect y="1005" width="1920" height="1.5" fill="#aaa"/>
<rect x="0" y="1006.5" width="1920" height="23.5" fill="#f0f0f0"/>
<path d="M1444,951v22M1585,951v22M1724,951v22M1188,1007v23M1254,1007v23M1425,1007v23M1687,1007v23M1741,1007v23" stroke="#d8d8d8"/>
<path d="M10,975v31" stroke="#bbb"/>
<g class="sb" fill="#222">
<text x="1449" y="967" textLength="40" lengthAdjust="spacingAndGlyphs">dx -0.01</text><text x="1589" y="967" textLength="37" lengthAdjust="spacingAndGlyphs">dy 0.06</text><text x="1729" y="967" textLength="59" lengthAdjust="spacingAndGlyphs">Zoom: 16.4</text>
<text x="3" y="1024" textLength="164" lengthAdjust="spacingAndGlyphs">links 342 nc 0  net 2: not conn 0</text>
<text x="1193" y="1024" textLength="30" lengthAdjust="spacingAndGlyphs">Z 2.20</text><text x="1258" y="1024" textLength="140" lengthAdjust="spacingAndGlyphs">X 199.800000  Y 128.000000</text><text x="1430" y="1024" textLength="218" lengthAdjust="spacingAndGlyphs">dx 199.800000  dy 128.000000  dist 237.285</text><text x="1692" y="1024" textLength="20" lengthAdjust="spacingAndGlyphs">mm</text>
</g>
<g class="sb" fill="#0b5a0b">
<text x="12" y="988" textLength="25" lengthAdjust="spacingAndGlyphs">Pads</text><text x="66" y="988" textLength="21" lengthAdjust="spacingAndGlyphs">Vias</text><text x="116" y="988" textLength="84" lengthAdjust="spacingAndGlyphs">Track Segments</text><text x="230" y="988" textLength="33" lengthAdjust="spacingAndGlyphs">Nodes</text><text x="345" y="988" textLength="27" lengthAdjust="spacingAndGlyphs">Links</text><text x="401" y="988" textLength="67" lengthAdjust="spacingAndGlyphs">Connections</text>
<text x="12" y="1003" textLength="17" lengthAdjust="spacingAndGlyphs">473</text><text x="66" y="1003">0</text><text x="116" y="1003" textLength="24" lengthAdjust="spacingAndGlyphs">1455</text><text x="230" y="1003" textLength="17" lengthAdjust="spacingAndGlyphs">455</text><text x="345" y="1003" textLength="17" lengthAdjust="spacingAndGlyphs">342</text><text x="401" y="1003" textLength="18" lengthAdjust="spacingAndGlyphs">342</text>
</g>
<g class="sb" fill="#8a0a0a"><text x="293" y="988" textLength="23" lengthAdjust="spacingAndGlyphs">Nets</text><text x="293" y="1003" textLength="17" lengthAdjust="spacingAndGlyphs">125</text></g>
<g class="sb" fill="#10107e"><text x="497" y="988" textLength="71" lengthAdjust="spacingAndGlyphs">Unconnected</text><text x="497" y="1003">0</text></g>

<!-- taskbar -->
<rect y="1030" width="1920" height="40" fill="#0f1216"/>
<rect x="48" y="1030" width="344" height="40" fill="#f2f2f2"/>
<path d="M16,1044l6-1v6h-6zM23.500,1042.500l8-1.500v8h-8zM16,1050h6v6l-6-1zM23.500,1050h8v8l-8-1.500z" fill="#fff"/>
<circle cx="67" cy="1050" r="9" fill="none" stroke="#111" stroke-width="3"/>
<text x="89" y="1055" font-size="14.500" fill="#444" textLength="162" lengthAdjust="spacingAndGlyphs">Taper ici pour rechercher</text>
<rect x="368" y="1043" width="5" height="10" rx="2.500" fill="none" stroke="#555"/><path d="M365,1050a5.500,5.500 0 0 0 11,0M370.500,1056v3M367,1059h7" stroke="#555" fill="none"/>
<path d="M408,1043h14M408,1057h14M410,1046h10v8h-10zM424,1043v1M424,1046v1" stroke="#ddd" fill="none"/>
<!-- taskbar buttons -->
<rect x="1174" y="1030" width="126" height="40" fill="#3f4448"/>
<g fill="#76b9ed"><rect x="447" y="1068" width="118" height="2"/><rect x="574" y="1068" width="118" height="2"/><rect x="928" y="1068" width="118" height="2"/><rect x="1054" y="1068" width="117" height="2"/><rect x="1174" y="1068" width="126" height="2"/><rect x="1304" y="1068" width="116" height="2"/><rect x="1475" y="1068" width="117" height="2"/><rect x="1601" y="1068" width="117" height="2"/></g>
<path d="M456,1041h8l4,3v17h-12z" fill="#f1c75a"/><path d="M456,1041h4v20h-4z" fill="#d9a23a"/>
<circle cx="591" cy="1050" r="10" fill="#e8671e"/><path d="M591,1040a10,10 0 0 1 9,14a7,7 0 0 0-9-9z" fill="#f8b52a"/><circle cx="590" cy="1052" r="5" fill="#53308f"/><path d="M583,1058a10,10 0 0 0 15,0l-6-4z" fill="#f59222"/>
<path d="M715,1045c5-6 14-4 15,1 1,6-3,9-7,9l-8-3z" fill="#d9a2a0"/><path d="M722,1052l4,10M727,1052l-4,9" stroke="#3a6ed8" stroke-width="2"/>
<rect x="755" y="1041" width="13" height="18" fill="#15733f"/><rect x="765" y="1043" width="9" height="14" fill="#fff"/><text x="757" y="1055" font-size="10" fill="#fff">X</text><path d="M768,1043v14M765,1048h9M765,1052h9" stroke="#15733f"/>
<text x="803" y="1052" font-size="16" fill="#b8ba70" font-weight="bold">W</text><text x="804" y="1061" font-size="6" fill="#ddd">2015</text>
<circle cx="856" cy="1050" r="11" fill="#0f95a3"/><path d="M852,1050m-3.500,0a3.500,3.500 0 1 0 7,0a3.500,3.500 0 1 0-7,0M860,1050m-3.500,0a3.500,3.500 0 1 0 7,0a3.500,3.500 0 1 0-7,0" fill="none" stroke="#fff" stroke-width="1.8"/>
<rect x="894" y="1051" width="9" height="7" fill="#ddd" stroke="#29c"/><rect x="901" y="1041" width="8" height="7" fill="#ddd" stroke="#29c"/><path d="M905,1048l-3,4 3,0-3,5" stroke="#fc3" fill="none"/>
<rect x="936" y="1040" width="20" height="22" fill="#e8d3a0"/><path d="M939,1045h8v6h5v6M943,1051v6" stroke="#b94a1a" fill="none" stroke-width="1.600"/>
<rect x="1062" y="1040" width="16" height="22" fill="#e9e9e9"/><path d="M1065,1058l10-15M1068,1060l9-12" stroke="#666" stroke-width="2"/>
<rect x="1187" y="1041" width="18" height="21" fill="#9a9a9a"/><rect x="1185" y="1044" width="7" height="15" fill="#2a2a2a"/><rect x="1200" y="1044" width="7" height="15" fill="#2a2a2a"/><rect x="1192" y="1046" width="8" height="10" fill="#b33"/>
<rect x="1311" y="1040" width="18" height="22" fill="#f0f0f0"/><path d="M1316,1060l10-16" stroke="#3c8a2a" stroke-width="3"/><path d="M1314,1046h8M1314,1050h5" stroke="#555"/>
<circle cx="1447" cy="1050" r="11" fill="#f08a18"/><circle cx="1447" cy="1050" r="6" fill="none" stroke="#fff" stroke-width="2"/><circle cx="1447" cy="1050" r="2" fill="#fff"/>
<path d="M1491,1039l11,11-11,11-11-11z" fill="#4a9a3c"/><path d="M1491,1039l5.500,5.500-5.500,5.500-5.500-5.500z" fill="#c43c4c"/><path d="M1480,1050l5.500-5.500 5.500,5.500-5.500,5.500z" fill="#3a78c8"/><path d="M1491,1050l5.500,5.500-5.500,5.500-5.500-5.500z" fill="#e8b820"/>
<path d="M1609,1044h18l-1,16h-16z" fill="#e8d000"/><text x="1610" y="1056" font-size="8" font-weight="bold" fill="#111">PDF</text>
<text class="tb" x="480" y="1054" textLength="52" lengthAdjust="spacingAndGlyphs">Datasheet</text>
<text class="tb" x="607" y="1054" textLength="79" lengthAdjust="spacingAndGlyphs">Motherboard...</text>
<text class="tb" x="962" y="1054" textLength="78" lengthAdjust="spacingAndGlyphs">KiCad 4.0.7 C...</text>
<text class="tb" x="1087" y="1054" textLength="78" lengthAdjust="spacingAndGlyphs">Pcbnew 4.0.7...</text>
<text class="tb" x="1212" y="1054" textLength="52" lengthAdjust="spacingAndGlyphs">3D Viewer</text>
<text class="tb" x="1337" y="1054" textLength="77" lengthAdjust="spacingAndGlyphs">[ Gamma_TC...</text>
<text class="tb" x="1508" y="1054" textLength="78" lengthAdjust="spacingAndGlyphs">MINGW64:/c...</text>
<text class="tb" x="1634" y="1054" textLength="76" lengthAdjust="spacingAndGlyphs">MAX31790-4...</text>
<path d="M1728,1044l8,3 8-7-3,11 3,9-8-4-8,3 2-8z" fill="#ee7a1a"/><circle cx="1736" cy="1051" r="2" fill="#fff"/>
<path d="M1754,1047h3l4-4v14l-4-4h-3zM1764,1046a6,6 0 0 1 0,8M1766,1043a10,10 0 0 1 0,14" stroke="#ddd" fill="none"/>
<rect x="1778" y="1044" width="11" height="9" fill="none" stroke="#ddd"/><rect x="1783" y="1040" width="9" height="8" fill="#0f1216" stroke="#ddd"/><path d="M1783,1053v4M1778,1057h10" stroke="#ddd"/>
<text class="tb" x="1819" y="1045" textLength="26" lengthAdjust="spacingAndGlyphs">14:31</text>
<text class="tb" x="1804" y="1063" textLength="57" lengthAdjust="spacingAndGlyphs">16/06/2018</text>
<path d="M1880,1041h16v14h-6l-3,3-1-3h-6z" fill="none" stroke="#ddd"/>
</svg>
</body></html>
